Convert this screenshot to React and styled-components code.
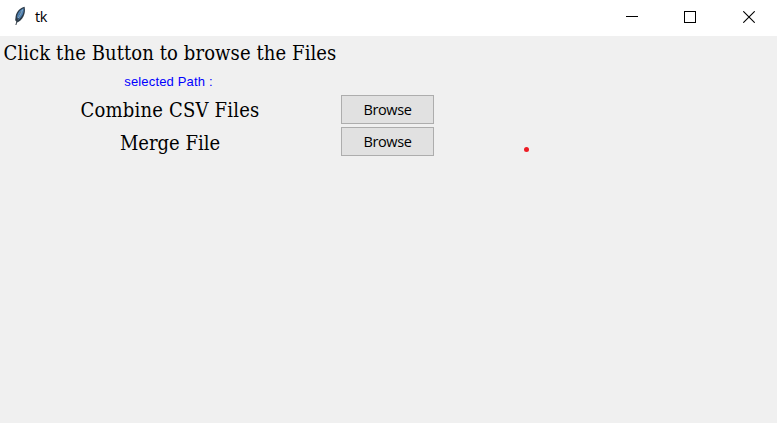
import React from "react";
import styled, { createGlobalStyle } from "styled-components";

const GlobalStyle = createGlobalStyle`
  * { box-sizing: border-box; }
  html, body { margin: 0; padding: 0; background: #f0f0f0; overflow: hidden; }
`;

const Window = styled.main`
  width: 777px;
  height: 423px;
  display: flex;
  flex-direction: column;
  background: #f0f0f0;
  color: #000;
`;

const TitleBar = styled.header`
  height: 36px;
  flex: none;
  display: flex;
  align-items: center;
  background: #fff;
`;

const AppIcon = styled.svg`
  width: 16px;
  height: 22px;
  margin-left: 12px;
  margin-top: -4px;
`;

const Title = styled.span`
  flex: 1;
  margin-left: 7px;
  padding-bottom: 2px;
  font: 14.5px/20px "Open Sans", "Noto Sans", sans-serif;
  letter-spacing: -0.3px;
`;

const Controls = styled.div`
  display: flex;
  height: 100%;
  margin-right: -1px;
`;

const ControlButton = styled.button`
  width: 58.5px;
  height: 100%;
  padding: 0 0 2px;
  border: 0;
  background: none;
  display: grid;
  place-items: center;
  svg { display: block; }
`;

const Form = styled.section`
  display: grid;
  grid-template-columns: 341px 93px;
  grid-template-rows: 32px 25px 32px 33px;
`;

const Label = styled.span`
  grid-column: 1;
  display: flex;
  align-items: center;
  justify-content: center;
  padding: 2px 1px 0 0;
  white-space: pre;
  font-family: "DejaVu Serif Condensed", "DejaVu Serif", serif;
  font-stretch: condensed;
  font-size: 20px;
  line-height: 28px;
  letter-spacing: ${(p) => p.$tracking || "0"};
`;

const PathLabel = styled.output`
  grid-column: 1;
  display: flex;
  align-items: center;
  justify-content: center;
  padding: 2px 4px 0 0;
  white-space: pre;
  color: #0000ff;
  font: 13px/18px "Liberation Sans", Arial, sans-serif;
  letter-spacing: 0.17px;
`;

const BrowseButton = styled.button`
  grid-column: 2;
  align-self: center;
  width: 93px;
  height: 29px;
  padding: 1px 0 0;
  border: 1px solid #adadad;
  background: #e1e1e1;
  color: #000;
  font: 14.5px/20px "Open Sans", "Noto Sans", sans-serif;
  letter-spacing: -0.4px;
`;

const PointerDot = styled.i`
  position: absolute;
  left: 524.3px;
  top: 147.4px;
  width: 5px;
  height: 5px;
  border-radius: 50%;
  background: #ed1c24;
`;

const Feather = () => (
  <AppIcon viewBox="0 0 16 22">
    <path d="M12.6 1.7C8.2 2.7 4.4 6.3 3.6 11.4L3.2 15.2 5.2 17.6C10.3 15.2 14.2 9 12.6 1.7Z" fill="#2b3a48" />
    <path d="M11.7 3.2C8.6 4.3 5.5 7 5 12.1L6.4 15C10.3 11.5 12.2 7.7 11.7 3.2Z" fill="#4d80b2" />
    <path d="M9.8 6 7 11.8 5 16 3.9 20" fill="none" stroke="#39434c" strokeWidth="1" />
    <path d="M10.6 4.5 8.6 9 6.3 13" fill="none" stroke="#92b9da" strokeWidth=".9" />
  </AppIcon>
);

export default function App() {
  return (
    <>
      <GlobalStyle />
      <Window>
        <TitleBar>
          <Feather />
          <Title>tk</Title>
          <Controls>
            <ControlButton aria-label="Minimize">
              <svg width="12" height="12" shapeRendering="crispEdges"><path d="M0 5.5H12" stroke="#000" /></svg>
            </ControlButton>
            <ControlButton aria-label="Maximize">
              <svg width="12" height="12" shapeRendering="crispEdges"><path d="M.5 .5H11.5V11.5H.5Z" fill="none" stroke="#000" /></svg>
            </ControlButton>
            <ControlButton aria-label="Close">
              <svg width="12" height="12"><path d="M.3 .3 11.7 11.7M11.7 .3.3 11.7" stroke="#000" strokeWidth="1.1" /></svg>
            </ControlButton>
          </Controls>
        </TitleBar>
        <Form>
          <Label $tracking="0.1px">Click the Button to browse the Files</Label>
          <PathLabel>selected Path :</PathLabel>
          <Label $tracking="0.2px">Combine CSV Files</Label>
          <BrowseButton>Browse</BrowseButton>
          <Label>Merge File</Label>
          <BrowseButton>Browse</BrowseButton>
        </Form>
        <PointerDot />
      </Window>
    </>
  );
}
